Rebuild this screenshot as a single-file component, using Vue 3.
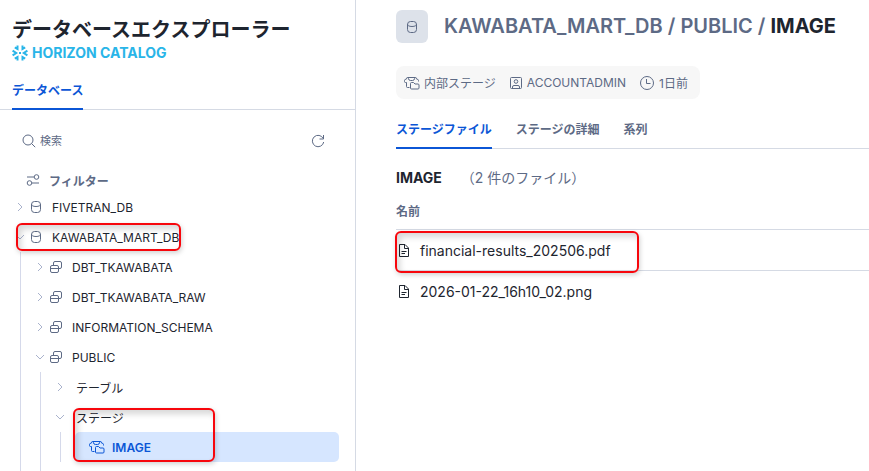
<script setup>
import { ref } from 'vue'

const query = ref('')
const schemas = ['DBT_TKAWABATA', 'DBT_TKAWABATA_RAW', 'INFORMATION_SCHEMA']
const files = ['financial-results_202506.pdf', '2026-01-22_16h10_02.png']
</script>

<template>
  <svg class="sprite" aria-hidden="true">
    <symbol id="i-db" viewBox="0 0 12 14">
      <rect x="1.500" y="1.500" width="9" height="11" rx="3" />
      <path d="M1.500 4c0 1.500 1.500 2.500 4.500 2.500s4.500-1 4.500-2.500" />
    </symbol>
    <symbol id="i-schema" viewBox="0 0 14 14">
      <rect x=".5" y="5.500" width="8" height="7" rx="1.500" />
      <path d="M.5 8.500h8M3.500 5.500V3a1.500 1.500 0 0 1 1.500-1.500h5a1.500 1.500 0 0 1 1.500 1.500v4a1.500 1.500 0 0 1-1.500 1.500H8.500" />
    </symbol>
    <symbol id="i-stage" viewBox="0 0 16 14">
      <path d="M5.500 11.500H3.500a1 1 0 0 1-1-1V6.500H1.500a1 1 0 0 1-1-1V4.500a1 1 0 0 1 1-1h.5a2 2 0 0 1 2-2h7a2 2 0 0 1 2 2h.5a1 1 0 0 1 1 1v1M4.500 1.500v1a2 2 0 0 0 2 2h2a2 2 0 0 0 2-2v-1" />
      <path d="M6.500 7.500a1 1 0 0 1 1-1h2l1.500 1.500h3a1 1 0 0 1 1 1v3a1 1 0 0 1-1 1h-6.500a1 1 0 0 1-1-1z" />
    </symbol>
    <symbol id="i-right" viewBox="0 0 10 10"><path d="M3 1l4 4-4 4" /></symbol>
    <symbol id="i-down" viewBox="0 0 10 10"><path d="M1 3l4 4 4-4" /></symbol>
    <symbol id="i-file" viewBox="0 0 12 15">
      <path d="M1.500 1.500h5.500l3.500 3.500v8.500h-9zM6.500 1.500v4h4M3.500 8.500h5M3.500 10.500h3.500" />
    </symbol>
  </svg>

  <div class="app">
    <aside class="sidebar">
      <header class="brand">
        <h1>データベースエクスプローラー</h1>
        <p class="catalog">
          <svg class="flake" viewBox="0 0 16 16" aria-hidden="true">
            <path d="M5.500.5v3.500L2.800 2.400M10.500.5v3.500l2.700-1.600M5.500 15.500v-3.500l-2.700 1.600M10.500 15.500v-3.500l2.700 1.600M.6 5.600L4.200 8 .6 10.400M15.400 5.600L11.800 8l3.600 2.400" />
            <path d="M8 7l1 1-1 1-1-1z" stroke-width="1" />
          </svg>
          HORIZON CATALOG
        </p>
      </header>
      <nav class="tabs side-tabs">
        <button class="tab active" type="button">データベース</button>
      </nav>
      <div class="search">
        <svg class="ic" viewBox="0 0 14 14" aria-hidden="true">
          <circle cx="6" cy="6" r="5" /><path d="M9.600 9.600l3.600 3.600" />
        </svg>
        <input v-model="query" type="text" placeholder="検索" aria-label="検索" />
        <button class="refresh" type="button" aria-label="更新">
          <svg class="ic" viewBox="0 0 14 14" aria-hidden="true">
            <path d="M12.200 4.500A5.700 5.700 0 1 0 12.700 8M12.500 1v4h-4" />
          </svg>
        </button>
      </div>
      <button class="filter" type="button">
        <svg class="ic" viewBox="0 0 14 14" aria-hidden="true">
          <circle cx="10.500" cy="4" r="2.300" /><circle cx="3.500" cy="10" r="2.300" />
          <path d="M1 4h7M6 10h7" />
        </svg>
        フィルター
      </button>

      <ul class="tree">
        <li>
          <button class="node" type="button">
            <svg class="chev"><use href="#i-right" /></svg>
            <svg class="db"><use href="#i-db" /></svg>FIVETRAN_DB
          </button>
        </li>
        <li>
          <button class="node" type="button">
            <svg class="chev"><use href="#i-down" /></svg>
            <svg class="db"><use href="#i-db" /></svg>KAWABATA_MART_DB
            <span class="mark mark-db"></span>
          </button>
          <ul class="branch grow">
            <li v-for="s in schemas" :key="s">
              <button class="node" type="button">
                <svg class="chev"><use href="#i-right" /></svg>
                <svg class="schema"><use href="#i-schema" /></svg>{{ s }}
              </button>
            </li>
            <li>
              <button class="node" type="button">
                <svg class="chev"><use href="#i-down" /></svg>
                <svg class="schema"><use href="#i-schema" /></svg>PUBLIC
              </button>
              <ul class="branch grow">
                <li>
                  <button class="node group" type="button">
                    <svg class="chev"><use href="#i-right" /></svg>テーブル
                  </button>
                </li>
                <li class="stages">
                  <button class="node group" type="button">
                    <svg class="chev"><use href="#i-down" /></svg>ステージ
                  </button>
                  <ul class="branch">
                    <li>
                      <button class="node selected" type="button">
                        <svg class="stage"><use href="#i-stage" /></svg>IMAGE
                      </button>
                    </li>
                  </ul>
                  <span class="mark mark-stage"></span>
                </li>
              </ul>
            </li>
          </ul>
        </li>
      </ul>
    </aside>

    <main class="content">
      <div class="heading">
        <span class="badge"><svg class="db"><use href="#i-db" /></svg></span>
        <h2>KAWABATA_MART_DB / PUBLIC / <b>IMAGE</b></h2>
      </div>
      <div class="meta">
        <span><svg class="stage"><use href="#i-stage" /></svg>内部ステージ</span>
        <span>
          <svg class="ic" viewBox="0 0 14 14" aria-hidden="true">
            <rect x="1.500" y="1.500" width="11" height="11" rx="1" />
            <circle cx="7" cy="5.500" r="1.800" />
            <path d="M3.500 12.500v-1.500a1.500 1.500 0 0 1 1.500-1.500h4a1.500 1.500 0 0 1 1.500 1.500v1.500" />
          </svg>ACCOUNTADMIN
        </span>
        <span>
          <svg class="clock" viewBox="0 0 16 16" aria-hidden="true">
            <circle cx="8" cy="8" r="6.500" /><path d="M7.500 4v4.500h4" />
          </svg>1日前
        </span>
      </div>
      <nav class="tabs main-tabs">
        <button class="tab active" type="button">ステージファイル</button>
        <button class="tab" type="button">ステージの詳細</button>
        <button class="tab" type="button">系列</button>
      </nav>
      <div class="summary"><h3>IMAGE</h3><span>（2 件のファイル）</span></div>
      <table>
        <thead><tr><th>名前</th></tr></thead>
        <tbody>
          <tr v-for="(f, i) in files" :key="f">
            <td>
              <div class="file">
                <svg class="doc"><use href="#i-file" /></svg>{{ f }}
                <span v-if="i === 0" class="mark mark-file"></span>
              </div>
            </td>
          </tr>
        </tbody>
      </table>
    </main>
  </div>
</template>

<style>
body { background: #fff; }
</style>

<style scoped>
.sprite { display: none; }
.app {
  display: flex;
  height: 100vh;
  overflow: hidden;
  font-family: Inter, "Noto Sans CJK JP", sans-serif;
  font-size: 12px;
  color: #1e252f;
}
.app * { box-sizing: border-box; }
h1, h2, h3, p, ul { margin: 0; padding: 0; }
ul { list-style: none; }
button, input { font: inherit; color: inherit; background: none; border: 0; padding: 0; }
button { cursor: pointer; }
svg { flex: none; fill: none; stroke: #5d6a85; stroke-width: 1; }
.ic { width: 14px; height: 14px; }
.db { width: 12px; height: 14px; }
.schema { width: 14px; height: 14px; }
.stage { width: 16px; height: 14px; }

.sidebar {
  display: flex;
  flex-direction: column;
  flex: 0 0 41%;
  max-width: 356px;
  border-right: 1px solid #d5dae4;
}
.brand { padding: 16px 12px 0; }
h1 { font-size: 20px; line-height: 28px; font-weight: 700; white-space: nowrap; }
.catalog {
  display: flex;
  align-items: center;
  gap: 4px;
  font-size: 14px;
  font-weight: 700;
  line-height: 18px;
  color: #29b5e8;
}
.flake { width: 16px; height: 16px; stroke: #29b5e8; stroke-width: 2; }

.tabs { display: flex; gap: 24px; height: 30px; border-bottom: 1px solid #d5dae4; }
.tab {
  margin-bottom: -1px;
  padding-bottom: 6px;
  border-bottom: 2px solid transparent;
  font-weight: 700;
  line-height: 20px;
  color: #5d6a85;
}
.tab.active { color: #0b56d6; border-color: #0b56d6; }
.side-tabs { padding: 0 12px; margin-top: 18px; }

.search { display: flex; align-items: center; gap: 4px; height: 20px; margin: 21px 30px 0 22px; }
.search input { flex: 1; min-width: 0; font-size: 11px; outline: none; }
.search input::placeholder { color: #5d6a85; opacity: 1; }
.refresh, .filter { display: flex; align-items: center; }
.filter {
  gap: 9px;
  height: 20px;
  margin: 19px 0 2px 26px;
  font-weight: 600;
  color: #5d6a85;
}

.tree, .grow, .tree > li:last-child, .grow > li:last-child { display: flex; flex-direction: column; }
.tree, .tree > li:last-child, .grow { flex: 1; }
.tree { padding-left: 15px; }
.grow > li:last-child { flex: 1; }
.grow > .stages { flex: none; }
.branch { margin-left: 5px; padding-left: 14px; border-left: 1px solid #d5d9ea; }
.node {
  position: relative;
  display: flex;
  align-items: center;
  width: 100%;
  height: 30px;
  text-align: left;
  white-space: nowrap;
}
.chev { width: 10px; height: 10px; margin-right: 5px; stroke: #a9b2cc; }
.node .db { margin-right: 10px; }
.node .schema { margin-right: 8px; }
.branch .group .chev { margin-right: 11px; }
.stages { position: relative; }
.stages .branch { margin-right: 16px; }
.node.selected {
  gap: 7px;
  padding-left: 14px;
  border-radius: 5px;
  background: #d6e6ff;
  font-weight: 600;
  color: #0b56d6;
}
.selected svg { stroke: #0b56d6; }

.mark {
  position: absolute;
  pointer-events: none;
  border: 2px solid #f7060c;
  border-radius: 6px;
  box-shadow: 1px 2px 5px rgba(0, 0, 0, 0.18), inset 3px 4px 6px rgba(0, 0, 0, 0.16);
}
.mark-db { left: 1px; top: 1px; width: 165px; height: 28px; }
.mark-stage { left: 18px; top: 6px; width: 142px; height: 54px; }
.mark-file { left: -1px; top: 1px; width: 244px; height: 42px; }

.content { flex: 1; min-width: 0; padding: 10px 0 0 40px; }
.heading { display: flex; align-items: center; gap: 16px; }
.badge {
  display: flex;
  align-items: center;
  justify-content: center;
  width: 32px;
  height: 33px;
  border-radius: 6px;
  background: #dde2ea;
}
h2 { padding-bottom: 2px; font-size: 20px; line-height: 28px; font-weight: 600; color: #5d6a85; white-space: nowrap; }
h2 b { font-weight: 700; color: #1e252f; }
.meta {
  display: inline-flex;
  align-items: center;
  gap: 13px;
  height: 33px;
  margin-top: 23px;
  padding: 0 12px 0 8px;
  border-radius: 8px;
  background: #f7f7f7;
  color: #5d6a85;
  white-space: nowrap;
}
.meta span { display: flex; align-items: center; gap: 4px; }
.clock { width: 16px; height: 16px; }
.main-tabs { margin-top: 20px; }
.summary { display: flex; align-items: center; gap: 19px; height: 28px; margin-top: 14px; font-size: 14px; color: #5d6a85; }
h3 { font-size: 14px; font-weight: 700; color: #1e252f; }
table { width: 100%; margin-top: 11px; border-collapse: collapse; }
th { height: 27px; padding: 0 0 6px; line-height: 18px; font-weight: 600; text-align: left; color: #5d6a85; }
td { padding: 0; font-size: 14px; }
tr { border-bottom: 1px solid #d5dae4; }
tbody tr:last-child { border-bottom: 0; }
.file { position: relative; display: flex; align-items: center; gap: 10px; height: 40px; padding: 2px 0 0 2px; }
.doc { width: 12px; height: 15px; stroke: #1e252f; }
</style>
